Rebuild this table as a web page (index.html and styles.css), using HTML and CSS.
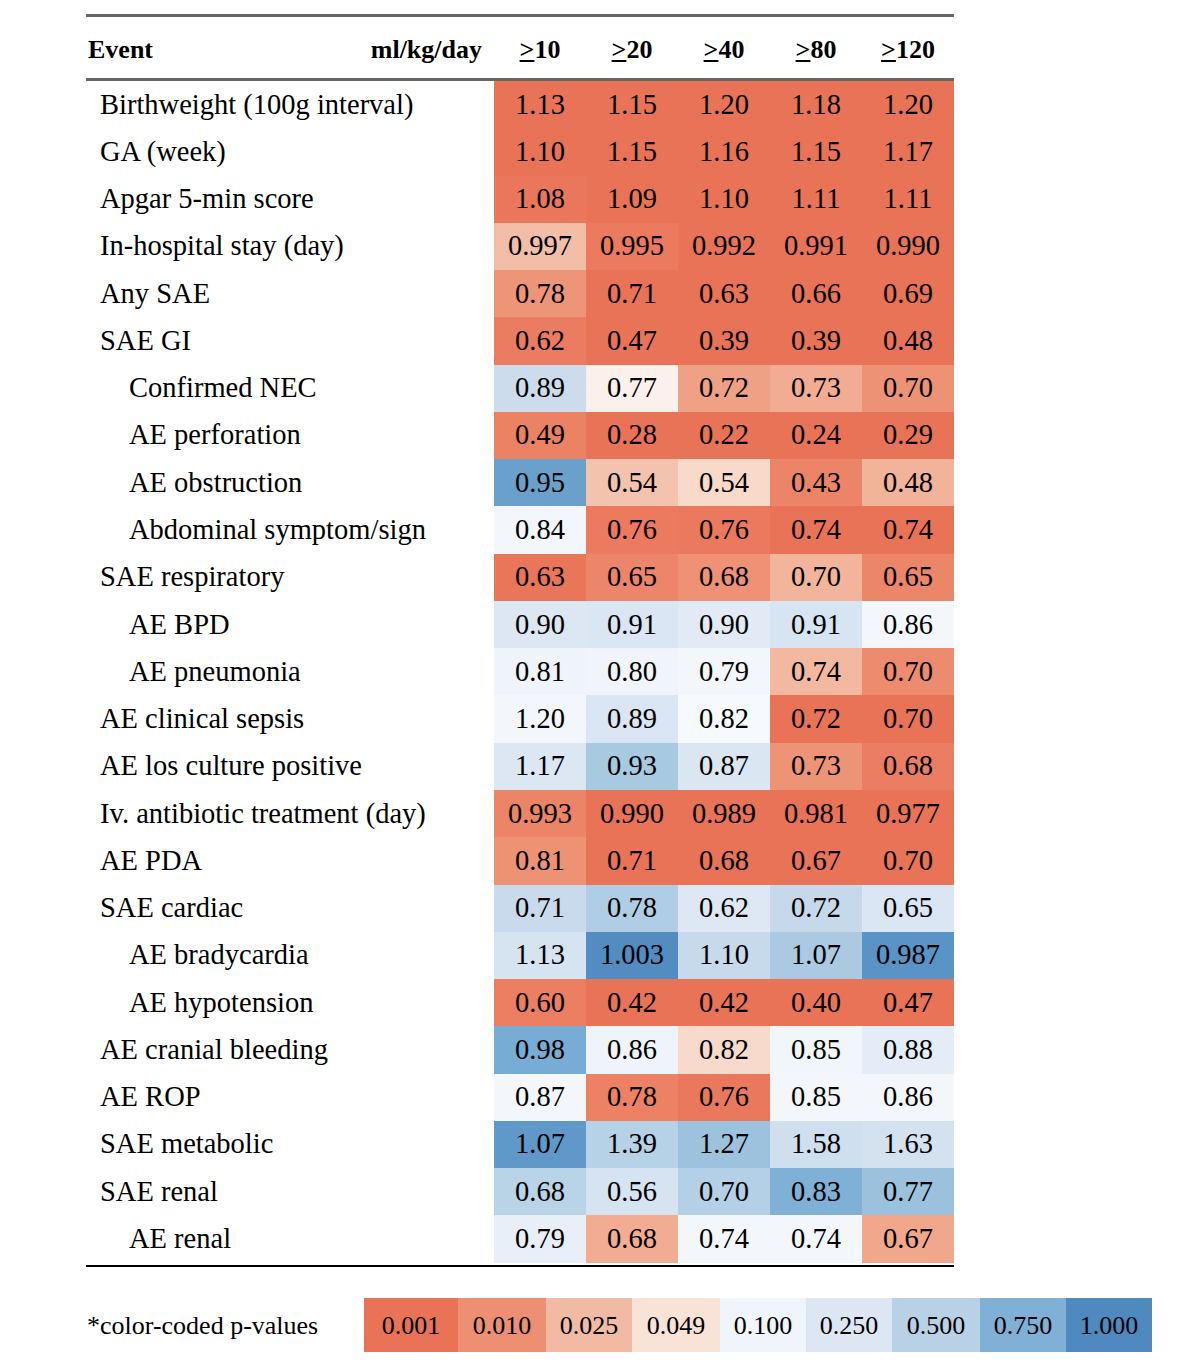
FILE: index.html
```html
<!DOCTYPE html>
<html>
<head>
<meta charset="utf-8">
<link rel="stylesheet" href="styles.css">
</head>
<body>
<div class="page">
  <div class="table">
    <div class="head">
      <div class="h-label"><span>Event</span><span>ml/kg/day</span></div>
      <div class="h-col"><u>&gt;</u>10</div>
      <div class="h-col"><u>&gt;</u>20</div>
      <div class="h-col"><u>&gt;</u>40</div>
      <div class="h-col"><u>&gt;</u>80</div>
      <div class="h-col"><u>&gt;</u>120</div>
    </div>
    <div class="body">
      <div class="lbl">Birthweight (100g interval)</div>
      <div class="c" style="background:#E97357">1.13</div><div class="c" style="background:#E97357">1.15</div><div class="c" style="background:#E97357">1.20</div><div class="c" style="background:#E97357">1.18</div><div class="c" style="background:#E97357">1.20</div>

      <div class="lbl">GA (week)</div>
      <div class="c" style="background:#E97357">1.10</div><div class="c" style="background:#E97357">1.15</div><div class="c" style="background:#E97357">1.16</div><div class="c" style="background:#E97357">1.15</div><div class="c" style="background:#E97357">1.17</div>

      <div class="lbl">Apgar 5-min score</div>
      <div class="c" style="background:#EA775B">1.08</div><div class="c" style="background:#E97357">1.09</div><div class="c" style="background:#E97357">1.10</div><div class="c" style="background:#E97357">1.11</div><div class="c" style="background:#E97357">1.11</div>

      <div class="lbl">In-hospital stay (day)</div>
      <div class="c" style="background:#F2BEA8">0.997</div><div class="c" style="background:#EB7A5E">0.995</div><div class="c" style="background:#E97357">0.992</div><div class="c" style="background:#E97357">0.991</div><div class="c" style="background:#E97357">0.990</div>

      <div class="lbl">Any SAE</div>
      <div class="c" style="background:#EE9479">0.78</div><div class="c" style="background:#E97357">0.71</div><div class="c" style="background:#E97357">0.63</div><div class="c" style="background:#E97357">0.66</div><div class="c" style="background:#E97357">0.69</div>

      <div class="lbl">SAE GI</div>
      <div class="c" style="background:#EB7C61">0.62</div><div class="c" style="background:#E97357">0.47</div><div class="c" style="background:#E97357">0.39</div><div class="c" style="background:#E97357">0.39</div><div class="c" style="background:#E97357">0.48</div>

      <div class="lbl sub">Confirmed NEC</div>
      <div class="c" style="background:#CCDCEC">0.89</div><div class="c" style="background:#FBF0EB">0.77</div><div class="c" style="background:#EFA185">0.72</div><div class="c" style="background:#F1AC93">0.73</div><div class="c" style="background:#ED9275">0.70</div>

      <div class="lbl sub">AE perforation</div>
      <div class="c" style="background:#EC8264">0.49</div><div class="c" style="background:#E97357">0.28</div><div class="c" style="background:#E97357">0.22</div><div class="c" style="background:#E97357">0.24</div><div class="c" style="background:#E97357">0.29</div>

      <div class="lbl sub">AE obstruction</div>
      <div class="c" style="background:#6AA1CC">0.95</div><div class="c" style="background:#F3C3AE">0.54</div><div class="c" style="background:#F8D9CA">0.54</div><div class="c" style="background:#EC8568">0.43</div><div class="c" style="background:#F1B39A">0.48</div>

      <div class="lbl sub">Abdominal symptom/sign</div>
      <div class="c" style="background:#F3F7FD">0.84</div><div class="c" style="background:#EB7A5E">0.76</div><div class="c" style="background:#EB795D">0.76</div><div class="c" style="background:#E97357">0.74</div><div class="c" style="background:#E97357">0.74</div>

      <div class="lbl">SAE respiratory</div>
      <div class="c" style="background:#EA7659">0.63</div><div class="c" style="background:#EC8569">0.65</div><div class="c" style="background:#EE9175">0.68</div><div class="c" style="background:#F2B59C">0.70</div><div class="c" style="background:#EC8669">0.65</div>

      <div class="lbl sub">AE BPD</div>
      <div class="c" style="background:#DCE7F3">0.90</div><div class="c" style="background:#DAE6F3">0.91</div><div class="c" style="background:#E1EAF5">0.90</div><div class="c" style="background:#D7E4F2">0.91</div><div class="c" style="background:#F3F7FC">0.86</div>

      <div class="lbl sub">AE pneumonia</div>
      <div class="c" style="background:#EFF4FB">0.81</div><div class="c" style="background:#F1F5FB">0.80</div><div class="c" style="background:#F3F7FC">0.79</div><div class="c" style="background:#F2B9A0">0.74</div><div class="c" style="background:#ED8B6F">0.70</div>

      <div class="lbl">AE clinical sepsis</div>
      <div class="c" style="background:#F3F7FD">1.20</div><div class="c" style="background:#DAE6F3">0.89</div><div class="c" style="background:#F6F9FD">0.82</div><div class="c" style="background:#E97357">0.72</div><div class="c" style="background:#E97357">0.70</div>

      <div class="lbl">AE los culture positive</div>
      <div class="c" style="background:#DCE7F3">1.17</div><div class="c" style="background:#A7CAE0">0.93</div><div class="c" style="background:#DAE6F2">0.87</div><div class="c" style="background:#ED9476">0.73</div><div class="c" style="background:#EB7E62">0.68</div>

      <div class="lbl">Iv. antibiotic treatment (day)</div>
      <div class="c" style="background:#EC8467">0.993</div><div class="c" style="background:#E97357">0.990</div><div class="c" style="background:#E97357">0.989</div><div class="c" style="background:#E97357">0.981</div><div class="c" style="background:#E97357">0.977</div>

      <div class="lbl">AE PDA</div>
      <div class="c" style="background:#EE9276">0.81</div><div class="c" style="background:#E97357">0.71</div><div class="c" style="background:#E97357">0.68</div><div class="c" style="background:#E97357">0.67</div><div class="c" style="background:#E97357">0.70</div>

      <div class="lbl">SAE cardiac</div>
      <div class="c" style="background:#C8DAEB">0.71</div><div class="c" style="background:#AFCDE4">0.78</div><div class="c" style="background:#DDE8F4">0.62</div><div class="c" style="background:#C5D9EB">0.72</div><div class="c" style="background:#DAE6F3">0.65</div>

      <div class="lbl sub">AE bradycardia</div>
      <div class="c" style="background:#D6E3F1">1.13</div><div class="c" style="background:#528CC1">1.003</div><div class="c" style="background:#C7DAEB">1.10</div><div class="c" style="background:#ABCAE2">1.07</div><div class="c" style="background:#5A93C6">0.987</div>

      <div class="lbl sub">AE hypotension</div>
      <div class="c" style="background:#EC7E61">0.60</div><div class="c" style="background:#E97357">0.42</div><div class="c" style="background:#E97357">0.42</div><div class="c" style="background:#E97357">0.40</div><div class="c" style="background:#E97357">0.47</div>

      <div class="lbl">AE cranial bleeding</div>
      <div class="c" style="background:#77ADD4">0.98</div><div class="c" style="background:#EFF4FB">0.86</div><div class="c" style="background:#F7DACB">0.82</div><div class="c" style="background:#F1F6FB">0.85</div><div class="c" style="background:#E4EDF7">0.88</div>

      <div class="lbl">AE ROP</div>
      <div class="c" style="background:#F3F7FC">0.87</div><div class="c" style="background:#EC8164">0.78</div><div class="c" style="background:#EA785C">0.76</div><div class="c" style="background:#F3F7FC">0.85</div><div class="c" style="background:#F3F7FC">0.86</div>

      <div class="lbl">SAE metabolic</div>
      <div class="c" style="background:#5F98C9">1.07</div><div class="c" style="background:#B6D2E7">1.39</div><div class="c" style="background:#9DC2DD">1.27</div><div class="c" style="background:#D0DFEE">1.58</div><div class="c" style="background:#D4E2F0">1.63</div>

      <div class="lbl">SAE renal</div>
      <div class="c" style="background:#B9D3E7">0.68</div><div class="c" style="background:#D6E3F1">0.56</div><div class="c" style="background:#B4D0E6">0.70</div><div class="c" style="background:#7FB0D5">0.83</div><div class="c" style="background:#9BC1DD">0.77</div>

      <div class="lbl sub">AE renal</div>
      <div class="c" style="background:#E8EFF8">0.79</div><div class="c" style="background:#F1AC92">0.68</div><div class="c" style="background:#F3F7FC">0.74</div><div class="c" style="background:#F3F7FC">0.74</div><div class="c" style="background:#F0A78C">0.67</div>
    </div>
  </div>

  <div class="legend">
    <div class="legend-label">*color-coded p-values</div>
    <div class="legend-scale">
      <div class="lg lg1">0.001</div>
      <div class="lg lg2">0.010</div>
      <div class="lg lg3">0.025</div>
      <div class="lg lg4">0.049</div>
      <div class="lg lg5">0.100</div>
      <div class="lg lg6">0.250</div>
      <div class="lg lg7">0.500</div>
      <div class="lg lg8">0.750</div>
      <div class="lg lg9">1.000</div>
    </div>
  </div>
</div>
</body>
</html>
```

FILE: styles.css
```css
html, body {
  margin: 0;
  padding: 0;
  background: #ffffff;
}

body {
  font-family: "Liberation Serif", "Times New Roman", serif;
  color: #000000;
}

.page {
  padding: 14px 0 0 86px;
}

.table {
  width: 868px;
}

.head {
  display: grid;
  grid-template-columns: 408px repeat(5, 92px);
  height: 61px;
  box-sizing: content-box;
  border-top: 3px solid #666666;
  border-bottom: 3px solid #666666;
  font-weight: bold;
  font-size: 26px;
}

.h-label {
  display: flex;
  align-items: center;
  justify-content: space-between;
  padding: 4px 12px 0 2px;
}

.h-col {
  display: flex;
  align-items: center;
  justify-content: center;
  padding-top: 4px;
}

.h-col u {
  text-decoration-thickness: 2px;
  text-underline-offset: 2px;
}

.body {
  display: grid;
  grid-template-columns: 408px repeat(5, 92px);
  grid-auto-rows: 47.28px;
  font-size: 28.5px;
  padding-bottom: 2px;
  border-bottom: 2px solid #000000;
}

.lbl {
  display: flex;
  align-items: center;
  padding-left: 14px;
  white-space: nowrap;
}

.lbl.sub {
  padding-left: 43px;
}

.c {
  display: flex;
  align-items: center;
  justify-content: center;
}

.legend {
  display: flex;
  align-items: center;
  margin-top: 31px;
}

.legend-label {
  width: 278px;
  padding-left: 1px;
  padding-top: 2px;
  box-sizing: border-box;
  font-size: 26px;
}

.legend-scale {
  display: flex;
  height: 54px;
}

.lg {
  display: flex;
  align-items: center;
  justify-content: center;
  padding-top: 2px;
  box-sizing: border-box;
  font-size: 26px;
  width: 86px;
}

.lg1 { background: #E97357; width: 94px; }
.lg2 { background: #ED8F73; width: 88px; }
.lg3 { background: #F1BAA2; }
.lg4 { background: #F8E3D6; width: 88px; }
.lg5 { background: #F0F5FC; }
.lg6 { background: #DCE7F3; }
.lg7 { background: #B9D1E6; width: 88px; }
.lg8 { background: #80B0D5; }
.lg9 { background: #4E89C0; }
```
